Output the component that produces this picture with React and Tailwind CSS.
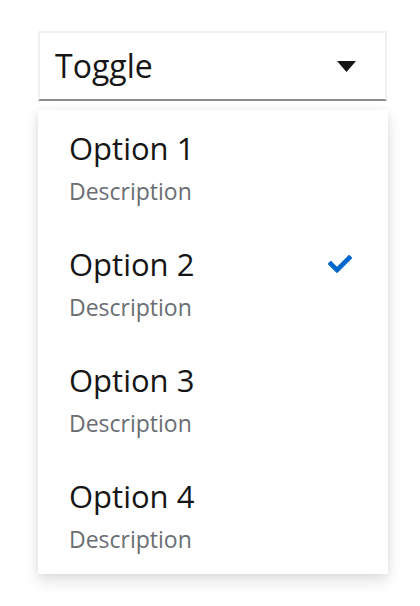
import React, { useState } from 'react';

const options = ['Option 1', 'Option 2', 'Option 3', 'Option 4'];

const CaretDown = () => (
  <svg width="19" height="11" viewBox="0 0 19 11" aria-hidden="true">
    <path d="M0 0 H19 L9.5 11 Z" fill="#151515" />
  </svg>
);

const Check = () => (
  <svg width="24" height="18" viewBox="0 71 512 370" aria-hidden="true">
    <path
      fill="#0066cc"
      d="M173.898 439.404l-166.4-166.4c-9.997-9.997-9.997-26.206 0-36.204l36.203-36.204c9.997-9.998 26.207-9.998 36.204 0L192 312.69 432.095 72.596c9.997-9.997 26.207-9.997 36.204 0l36.203 36.204c9.997 9.997 9.997 26.206 0 36.204l-294.4 294.401c-9.998 9.997-26.207 9.997-36.204-.001z"
    />
  </svg>
);

export default function App() {
  const [selected, setSelected] = useState('Option 2');

  return (
    <div className="min-h-[606px] bg-white pl-[38px] pt-[31px] font-['Open_Sans',sans-serif]">
      <div className="w-[349px]">
        <button className="flex h-[70px] w-full items-center justify-between border-x-2 border-t-2 border-b-2 border-x-[#f0f0f0] border-t-[#f0f0f0] border-b-[#8a8d90] bg-white pl-[15px] pr-[29px] text-[32px] leading-[40px] text-[#151515]">
          <span>Toggle</span>
          <CaretDown />
        </button>
        <ul className="mt-[9px] w-[350px] bg-white shadow-[0_7px_14px_0_rgba(3,3,3,0.12),0_0_7px_0_rgba(3,3,3,0.06)]">
          {options.map((opt) => (
            <li
              key={opt}
              onClick={() => setSelected(opt)}
              className="h-[116px] cursor-pointer pl-[31px] pr-[36px] pt-[18px]"
            >
              <div className="flex h-[40px] items-center justify-between">
                <span className="text-[31px] leading-[40px] text-[#151515]">{opt}</span>
                {selected === opt && <Check />}
              </div>
              <div className="mt-[8px] text-[23px] leading-[30px] text-[#6a6e73]">Description</div>
            </li>
          ))}
        </ul>
      </div>
    </div>
  );
}
